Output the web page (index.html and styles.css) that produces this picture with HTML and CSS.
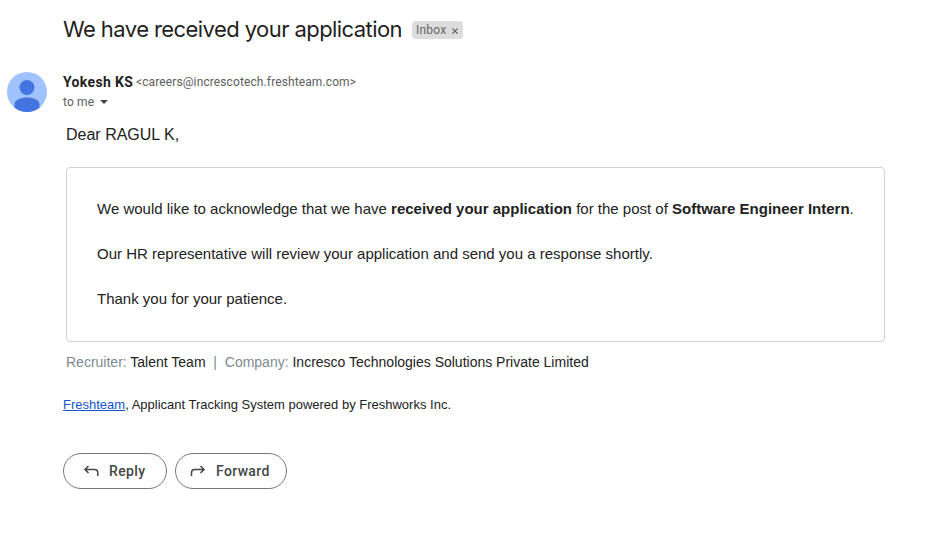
FILE: index.html
```html
<!DOCTYPE html>
<html lang="en">
<head>
<meta charset="utf-8">
<title>We have received your application</title>
<link rel="stylesheet" href="styles.css">
</head>
<body>
<main class="mail">
  <header class="subject-row">
    <h1 class="subject">We have received your application</h1>
    <span class="label"><span class="label-name">Inbox</span><svg class="label-close" viewBox="0 0 8 8"><path d="M1.300 2.300l5.400 5.400M6.700 2.300l-5.400 5.400"/></svg></span>
  </header>
  <section class="sender-row">
    <svg class="avatar" viewBox="0 0 40 40"><defs><clipPath id="disc"><circle cx="20" cy="20" r="20"/></clipPath></defs><g clip-path="url(#disc)"><rect width="40" height="40" fill="#a0c3ff"/><circle cx="20" cy="15.500" r="7.500" fill="#4374e0"/><path d="M7.500 40V32C7.500 28 14 25.500 20 25.500S32.500 28 32.500 32V40z" fill="#4374e0"/></g></svg>
    <div class="sender">
      <div class="from"><strong class="name">Yokesh KS</strong><span class="email">&lt;careers@increscotech.freshteam.com&gt;</span></div>
      <div class="to"><span>to me</span><i class="caret"></i></div>
    </div>
  </section>
  <article class="body">
    <p class="greeting">Dear RAGUL K,</p>
    <div class="card">
      <p>We would like to acknowledge that we have <b>received your application</b> for the post of <b>Software Engineer Intern</b>.</p>
      <p>Our HR representative will review your application and send you a response shortly.</p>
      <p>Thank you for your patience.</p>
    </div>
    <p class="meta"><span class="muted">Recruiter:</span> Talent Team &nbsp;<span class="muted">|</span>&nbsp; <span class="muted">Company:</span> Incresco Technologies Solutions Private Limited</p>
    <p class="powered"><a href="#">Freshteam</a>, Applicant Tracking System powered by Freshworks Inc.</p>
  </article>
  <footer class="actions">
    <button class="action reply"><svg viewBox="0 0 20 20"><path d="M7.500 5L4 8.500 7.500 12M4 8.500H13.500q3.300 0 3.300 3.300V15"/></svg><span>Reply</span></button>
    <button class="action forward"><svg viewBox="0 0 20 20"><path d="M12.500 5L16 8.500 12.500 12M16 8.500H6.800Q3.500 8.500 3.500 11.800V15"/></svg><span>Forward</span></button>
  </footer>
</main>
</body>
</html>
```
FILE: styles.css
```css
* { box-sizing: border-box; }
body { margin: 0; background: #fff; color: #222; font-family: "Liberation Sans", Arial, sans-serif; }
p, h1 { margin: 0; }
.mail { padding: 16px 56px 0 7px; }
.subject-row { display: flex; align-items: center; height: 28px; padding-left: 56px; }
.subject { width: 339px; padding-bottom: 2px; font: 400 22px/26px Inter, sans-serif; letter-spacing: -0.57px; color: #1f1f1f; white-space: nowrap; }
.label { display: flex; align-items: center; justify-content: space-between; width: 51px; height: 18px; margin-left: 10px; padding: 0 4px; border-radius: 4px; background: #ddd; color: #666; font: 12px/18px Roboto, sans-serif; letter-spacing: .2px; }
.label-close { width: 8px; height: 8px; stroke: #666; stroke-width: 1.2; fill: none; }
.sender-row { display: flex; margin-top: 28px; height: 40px; }
.avatar { width: 40px; height: 40px; }
.sender { margin-left: 16px; white-space: nowrap; }
.from { display: flex; align-items: center; height: 20px; }
.name { width: 70px; font: 700 14px/20px Roboto, sans-serif; letter-spacing: .35px; color: #1f1f1f; }
.email { margin-left: 3px; font: 12px/20px Roboto, sans-serif; letter-spacing: .11px; color: #5e5e5e; }
.to { display: flex; align-items: center; height: 20px; color: #5e5e5e; font: 12px/20px Roboto, sans-serif; letter-spacing: .15px; }
.caret { margin-left: 6px; border: 4px solid transparent; border-top-color: #444; border-bottom: 0; }
.body { padding-left: 56px; }
.greeting { margin: 14px 0 0 3px; font-size: 16px; line-height: 18px; }
.card { width: 819px; height: 175px; margin: 23px 0 0 3px; padding: 30px; border: 1px solid #cfd2d9; border-radius: 4px; font-size: 15px; line-height: 22.5px; white-space: nowrap; }
.card p + p { margin-top: 22.5px; }
.meta { margin: 11px 0 0 3px; font-size: 14px; line-height: 18px; }
.muted { color: #7c8b90; }
.powered { margin-top: 25px; font-size: 13px; line-height: 17px; }
.powered a { color: #15c; }
.actions { display: flex; gap: 8px; margin: 40px 0 0 56px; }
.action { display: flex; align-items: center; height: 36px; padding: 0 0 0 17px; border: 1px solid #747775; border-radius: 18px; background: #fff; color: #444746; font: 500 14px/20px Roboto, sans-serif; letter-spacing: .35px; }
.action svg { width: 20px; height: 20px; margin-right: 8px; fill: none; stroke: #444746; stroke-width: 1.5; }
.reply { width: 104px; }
.forward { width: 112px; padding-left: 12px; }
```
